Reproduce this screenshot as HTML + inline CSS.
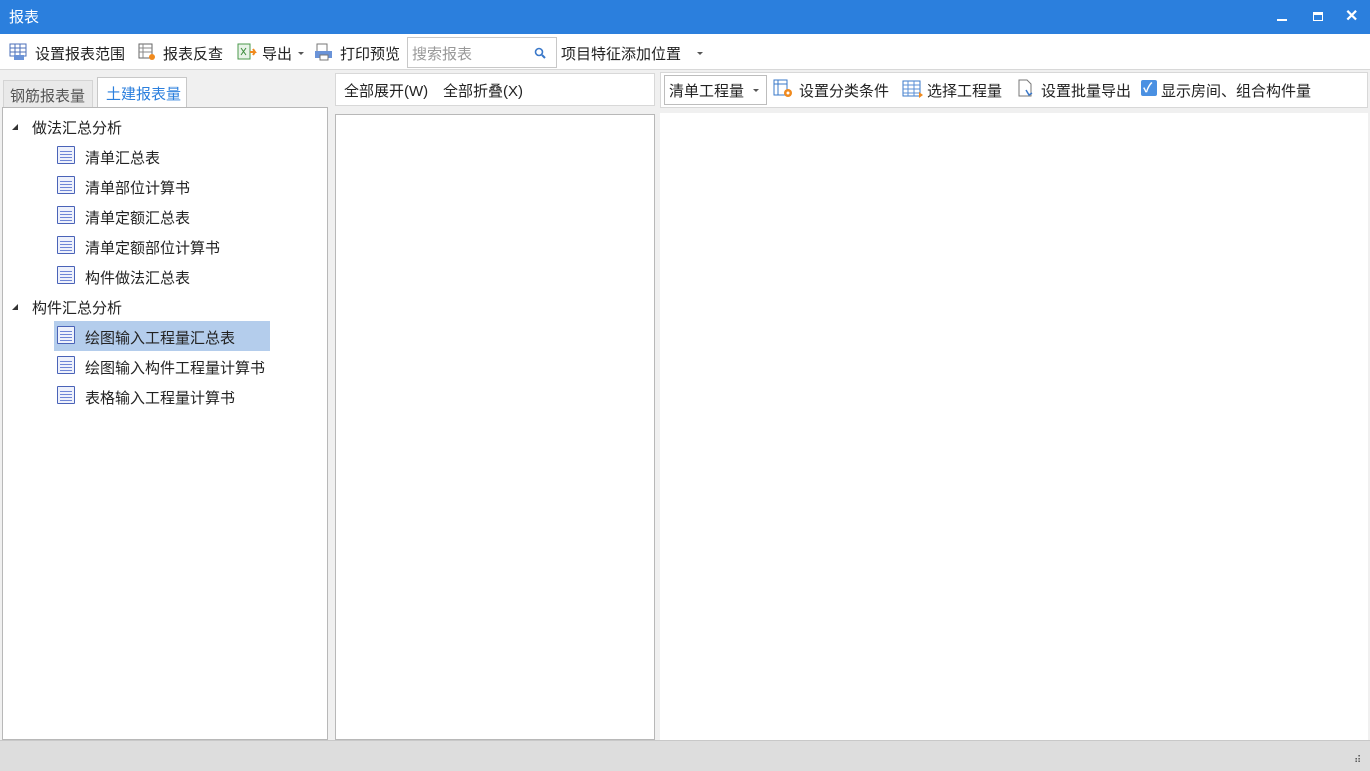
<!DOCTYPE html>
<html><head><meta charset="utf-8"><style>
*{margin:0;padding:0;box-sizing:border-box}
body{width:1370px;height:771px;background:#f0f0f0;font-family:"Liberation Sans","Noto Sans CJK SC",sans-serif;font-size:15px;color:#222;position:relative;overflow:hidden}
.a{position:absolute}
.t{position:absolute;white-space:nowrap;line-height:18px;margin-top:2px}
.doc{position:absolute;width:18px;height:18px;border:1px solid #4a63b8;background:linear-gradient(#6f86d6,#6f86d6) 2px 4px/12px 1px no-repeat,linear-gradient(#6f86d6,#6f86d6) 2px 7px/12px 1px no-repeat,linear-gradient(#6f86d6,#6f86d6) 2px 10px/12px 1px no-repeat,linear-gradient(#6f86d6,#6f86d6) 2px 13px/12px 1px no-repeat,#eef1fb;border-radius:1px}
.tri{position:absolute;width:0;height:0;border-left:6px solid transparent;border-bottom:6px solid #333}
.dd{position:absolute;width:0;height:0;border-left:3px solid transparent;border-right:3px solid transparent;border-top:3px solid #555}
</style></head><body>
<div class="a" style="left:0;top:0;width:1370px;height:34px;background:#2b7fdd"></div>
<div class="t" style="left:9px;top:7px;color:#fff;font-size:15px">报表</div>
<div class="a" style="left:1277px;top:19px;width:10px;height:2px;background:#fff"></div>
<div class="a" style="left:1313px;top:12px;width:10px;height:9px;border:1px solid #fff;border-top-width:3px"></div>
<div class="t" style="left:1345px;top:6px;color:#fff;font-size:16px;font-weight:bold">✕</div>

<div class="a" style="left:0;top:34px;width:1370px;height:36px;background:#fff;border-bottom:1px solid #d8d8d8"></div>
<svg class="a" style="left:9px;top:43px" width="20" height="18"><rect x="1" y="1" width="16" height="12" fill="none" stroke="#4b6fb8"/><path d="M1 5h16M1 9h16M6 1v12M11 1v12" stroke="#4b6fb8"/><rect x="5" y="12" width="10" height="5" fill="#6a93d8"/></svg>
<div class="t" style="left:35px;top:44px">设置报表范围</div>
<svg class="a" style="left:138px;top:43px" width="20" height="18"><rect x="1" y="1" width="13" height="14" fill="none" stroke="#666"/><path d="M1 5h13M1 9h13M5 1v14" stroke="#888"/><circle cx="14" cy="14" r="3" fill="#f08a1e"/></svg>
<div class="t" style="left:163px;top:44px">报表反查</div>
<svg class="a" style="left:237px;top:43px" width="22" height="18"><rect x="1" y="1" width="12" height="15" fill="#e8f3e8" stroke="#4b9a4b"/><path d="M4 5l5 7M9 5l-5 7" stroke="#3a8a3a"/><path d="M13 9h5l-2-3M18 9l-2 3" stroke="#f08a1e" stroke-width="2" fill="none"/></svg>
<div class="t" style="left:262px;top:44px">导出</div>
<div class="dd" style="left:298px;top:52px"></div>
<svg class="a" style="left:314px;top:43px" width="22" height="18"><rect x="3" y="1" width="10" height="9" fill="#fff" stroke="#777"/><rect x="1" y="8" width="17" height="7" fill="#6a93d8"/><rect x="6" y="12" width="8" height="5" fill="#fff" stroke="#777"/></svg>
<div class="t" style="left:340px;top:44px">打印预览</div>
<div class="a" style="left:407px;top:37px;width:150px;height:31px;border:1px solid #c8c8c8;background:#fff"></div>
<div class="t" style="left:412px;top:44px;color:#999">搜索报表</div>
<svg class="a" style="left:534px;top:47px" width="12" height="12"><circle cx="5" cy="5" r="3.5" fill="none" stroke="#3a78c9" stroke-width="1.6"/><path d="M8 8l3 3" stroke="#3a78c9" stroke-width="2"/></svg>
<div class="t" style="left:561px;top:44px">项目特征添加位置</div>
<div class="dd" style="left:697px;top:52px"></div>

<div class="a" style="left:3px;top:80px;width:90px;height:27px;background:#e9e9e9;border:1px solid #d4d4d4;border-bottom:none"></div>
<div class="t" style="left:10px;top:86px;color:#555">钢筋报表量</div>
<div class="a" style="left:97px;top:77px;width:90px;height:31px;background:#fff;border:1px solid #c8c8c8;border-bottom:none"></div>
<div class="t" style="left:106px;top:84px;color:#2b7fdd">土建报表量</div>
<div class="a" style="left:2px;top:107px;width:326px;height:633px;background:#fff;border:1px solid #b8b8b8"></div>
<div class="tri" style="left:12px;top:124px"></div>
<div class="t" style="left:32px;top:118px">做法汇总分析</div>
<div class="doc" style="left:57px;top:146px"></div><div class="t" style="left:85px;top:148px">清单汇总表</div>
<div class="doc" style="left:57px;top:176px"></div><div class="t" style="left:85px;top:178px">清单部位计算书</div>
<div class="doc" style="left:57px;top:206px"></div><div class="t" style="left:85px;top:208px">清单定额汇总表</div>
<div class="doc" style="left:57px;top:236px"></div><div class="t" style="left:85px;top:238px">清单定额部位计算书</div>
<div class="doc" style="left:57px;top:266px"></div><div class="t" style="left:85px;top:268px">构件做法汇总表</div>
<div class="tri" style="left:12px;top:304px"></div>
<div class="t" style="left:32px;top:298px">构件汇总分析</div>
<div class="a" style="left:54px;top:321px;width:216px;height:30px;background:#b4cdec"></div>
<div class="doc" style="left:57px;top:326px"></div><div class="t" style="left:85px;top:328px">绘图输入工程量汇总表</div>
<div class="doc" style="left:57px;top:356px"></div><div class="t" style="left:85px;top:358px">绘图输入构件工程量计算书</div>
<div class="doc" style="left:57px;top:386px"></div><div class="t" style="left:85px;top:388px">表格输入工程量计算书</div>

<div class="a" style="left:335px;top:73px;width:320px;height:33px;background:#fff;border:1px solid #d8d8d8"></div>
<div class="t" style="left:344px;top:81px">全部展开(W)</div>
<div class="t" style="left:443px;top:81px">全部折叠(X)</div>
<div class="a" style="left:335px;top:114px;width:320px;height:626px;background:#fff;border:1px solid #b8b8b8"></div>

<div class="a" style="left:660px;top:72px;width:708px;height:36px;background:#fff;border:1px solid #d8d8d8"></div>
<div class="a" style="left:664px;top:75px;width:103px;height:30px;border:1px solid #bdbdbd;background:#fff"></div>
<div class="t" style="left:669px;top:81px;font-size:15px">清单工程量</div>
<div class="dd" style="left:753px;top:89px"></div>
<svg class="a" style="left:773px;top:79px" width="22" height="20"><rect x="1" y="1" width="13" height="15" fill="#fff" stroke="#3a78c9"/><path d="M1 5h13M5 1v15" stroke="#3a78c9"/><circle cx="15" cy="14" r="4" fill="#f08a1e"/><circle cx="15" cy="14" r="1.5" fill="#fff"/></svg>
<div class="t" style="left:799px;top:81px">设置分类条件</div>
<svg class="a" style="left:902px;top:80px" width="22" height="18"><rect x="1" y="1" width="17" height="15" fill="#fff" stroke="#3a78c9"/><path d="M1 5h17M1 9h17M1 13h17M6 1v15M12 1v15" stroke="#5a8fd6"/><path d="M17 12l4 3-4 3z" fill="#f08a1e"/></svg>
<div class="t" style="left:927px;top:81px">选择工程量</div>
<svg class="a" style="left:1017px;top:79px" width="20" height="20"><path d="M2 1h8l4 4v12H2z" fill="#fff" stroke="#777"/><path d="M9 11l3 5 3-2" stroke="#3a78c9" stroke-width="1.5" fill="none"/></svg>
<div class="t" style="left:1041px;top:81px">设置批量导出</div>
<div class="a" style="left:1141px;top:80px;width:16px;height:16px;background:#4a90e2;border-radius:2px"></div>
<div class="t" style="left:1143px;top:77px;color:#fff;font-size:13px;font-weight:bold">✓</div>
<div class="t" style="left:1161px;top:81px">显示房间、组合构件量</div>
<div class="a" style="left:660px;top:113px;width:708px;height:627px;background:#fff"></div>

<div class="a" style="left:0;top:740px;width:1370px;height:31px;background:#dddddd;border-top:1px solid #c8c8c8"></div>
<div class="t" style="left:1354px;top:750px;color:#555;font-size:10px">⠾</div>
</body></html>
